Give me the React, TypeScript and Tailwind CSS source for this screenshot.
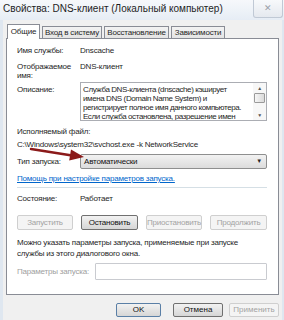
import React from 'react';

const font = { fontFamily: '"Liberation Sans", Arial, sans-serif' };

function Btn({ label, disabled, w, h = 'h-[15px]', bold }: { label: string; disabled?: boolean; w: string; h?: string; bold?: boolean }) {
  return (
    <div
      className={`${w} ${h} flex items-center justify-center rounded-[2px] border text-[8px] leading-none ${
        disabled
          ? 'border-[#cfcfcf] bg-[#f4f4f4] text-[#a3a3a3]'
          : bold
          ? 'border-[#5a7fa6] bg-gradient-to-b from-[#f2f2f2] to-[#d6d6d6] text-[#111]'
          : 'border-[#707070] bg-gradient-to-b from-[#f2f2f2] to-[#d6d6d6] text-[#111]'
      }`}
    >
      {label}
    </div>
  );
}

export default function App() {
  return (
    <div
      className="w-[284px] h-[320px] overflow-hidden bg-[#dfe7f0] text-[#262626] flex flex-col"
      style={font}
    >
      {/* title bar */}
      <div className="h-[20px] flex items-start justify-between pl-[3px] bg-gradient-to-b from-[#f6f8fb] to-[#e6edf5]">
        <span className="text-[10px] leading-none mt-[4px] text-[#1e1e1e]">
          Свойства: DNS-клиент (Локальный компьютер)
        </span>
        <div className="w-[30px] h-[18px] mr-[1px] rounded-b-[3px] border border-t-0 border-[#c0c9d5] bg-gradient-to-b from-[#f7f9fb] to-[#e5e9ef] flex items-center justify-center text-[9px] text-[#9aa0a8] leading-none">
          ✕
        </div>
      </div>

      {/* client area */}
      <div className="flex-1 ml-[3px] mr-[2px] bg-[#f0f0f0] flex flex-col px-[3px] pt-[4px]">
        {/* tabs */}
        <div className="flex items-end gap-[2px] pl-[1px] h-[14px] text-[8px] leading-none tracking-[-0.2px]">
          <div className="w-[33px] h-[15px] -mb-px z-10 bg-white border border-b-0 border-[#898c95] flex items-center justify-center">Общие</div>
          <div className="w-[60px] h-[12px] bg-gradient-to-b from-[#f3f3f3] to-[#e4e4e4] border border-b-0 border-[#898c95] flex items-center justify-center">Вход в систему</div>
          <div className="w-[65px] h-[12px] bg-gradient-to-b from-[#f3f3f3] to-[#e4e4e4] border border-b-0 border-[#898c95] flex items-center justify-center">Восстановление</div>
          <div className="w-[54px] h-[12px] bg-gradient-to-b from-[#f3f3f3] to-[#e4e4e4] border border-b-0 border-[#898c95] flex items-center justify-center">Зависимости</div>
        </div>

        {/* panel */}
        <div className="relative h-[257px] bg-white border border-[#898c95] flex flex-col pl-[10px] pr-[11px] pt-[7px] text-[8px] leading-[9px] tracking-[-0.2px]">
          <div className="flex">
            <span className="w-[63px]">Имя службы:</span>
            <span>Dnscache</span>
          </div>
          <div className="flex mt-[7px]">
            <span className="w-[63px]">Отображаемое<br />имя:</span>
            <span>DNS-клиент</span>
          </div>
          <div className="flex mt-[2px]">
            <span className="w-[63px] pt-[3px]">Описание:</span>
            <div className="flex-1 h-[39px] border border-[#abadb3] flex">
              <div className="flex-1 pl-[2px] pt-[2px] leading-[9px] overflow-hidden whitespace-nowrap tracking-[-0.4px]">
                Служба DNS-клиента (dnscache) кэширует<br />
                имена DNS (Domain Name System) и<br />
                регистрирует полное имя данного компьютера.<br />
                Если служба остановлена, разрешение имен
              </div>
              <div className="w-[13px] flex flex-col items-center bg-[#f7f7f7]">
                <span className="h-[10px] flex items-center text-[5px] text-[#555]">▲</span>
                <div className="w-[11px] h-[10px] border border-[#9a9a9a] rounded-[1px] bg-gradient-to-r from-[#f6f6f6] to-[#dadada]" />
                <div className="flex-1" />
                <span className="h-[9px] flex items-center text-[5px] text-[#555]">▼</span>
              </div>
            </div>
          </div>
          <div className="mt-[6px]">Исполняемый файл:</div>
          <div className="mt-[4px]">C:\Windows\system32\svchost.exe -k NetworkService</div>
          <div className="flex items-center mt-[5px]">
            <span className="w-[63px]">Тип запуска:</span>
            <div className="flex-1 h-[15px] border border-[#8e8f8f] rounded-[2px] bg-gradient-to-b from-[#f2f2f2] to-[#dcdcdc] flex items-center justify-between pl-[3px] pr-[4px]">
              <span className="text-[#111]">Автоматически</span>
              <span className="text-[6px]">▼</span>
            </div>
          </div>
          <div className="mt-[5px] text-[#0066cc] underline">Помощь при настройке параметров запуска.</div>
          <div className="mt-[4px] h-px bg-[#d5dfe5]" />
          <div className="flex mt-[6px]">
            <span className="w-[63px]">Состояние:</span>
            <span>Работает</span>
          </div>
          <div className="flex justify-between mt-[12px]">
            <Btn label="Запустить" disabled w="w-[56px]" />
            <Btn label="Остановить" w="w-[57px]" />
            <Btn label="Приостановить" disabled w="w-[56px]" />
            <Btn label="Продолжить" disabled w="w-[57px]" />
          </div>
          <div className="mt-[7px] leading-[11px]">
            Можно указать параметры запуска, применяемые при запуске<br />службы из этого диалогового окна.
          </div>
          <div className="flex items-center mt-[4px]">
            <span className="w-[78px] text-[#a0a0a0]">Параметры запуска:</span>
            <div className="flex-1 h-[17px] border border-[#c9cbd0] rounded-[1px] bg-white" />
          </div>

          {/* red arrow annotation */}
          <svg className="absolute left-[20px] top-[105px]" width="60" height="20" viewBox="0 0 60 20">
            <path d="M4 5 L45 11.6" stroke="#8b1a1a" strokeWidth="2.5" strokeLinecap="round" />
            <path d="M44 5.6 L57 13 L42.2 16.4 Z" fill="#8b1a1a" />
          </svg>
        </div>

        {/* bottom buttons */}
        <div className="flex justify-end mt-[8px]">
          <Btn label="OK" w="w-[45px]" h="h-[14px]" bold />
          <div className="w-[12px]" />
          <Btn label="Отмена" w="w-[50px]" h="h-[14px]" />
          <div className="w-[6px]" />
          <Btn label="Применить" disabled w="w-[50px]" h="h-[14px]" />
        </div>
      </div>
    </div>
  );
}
